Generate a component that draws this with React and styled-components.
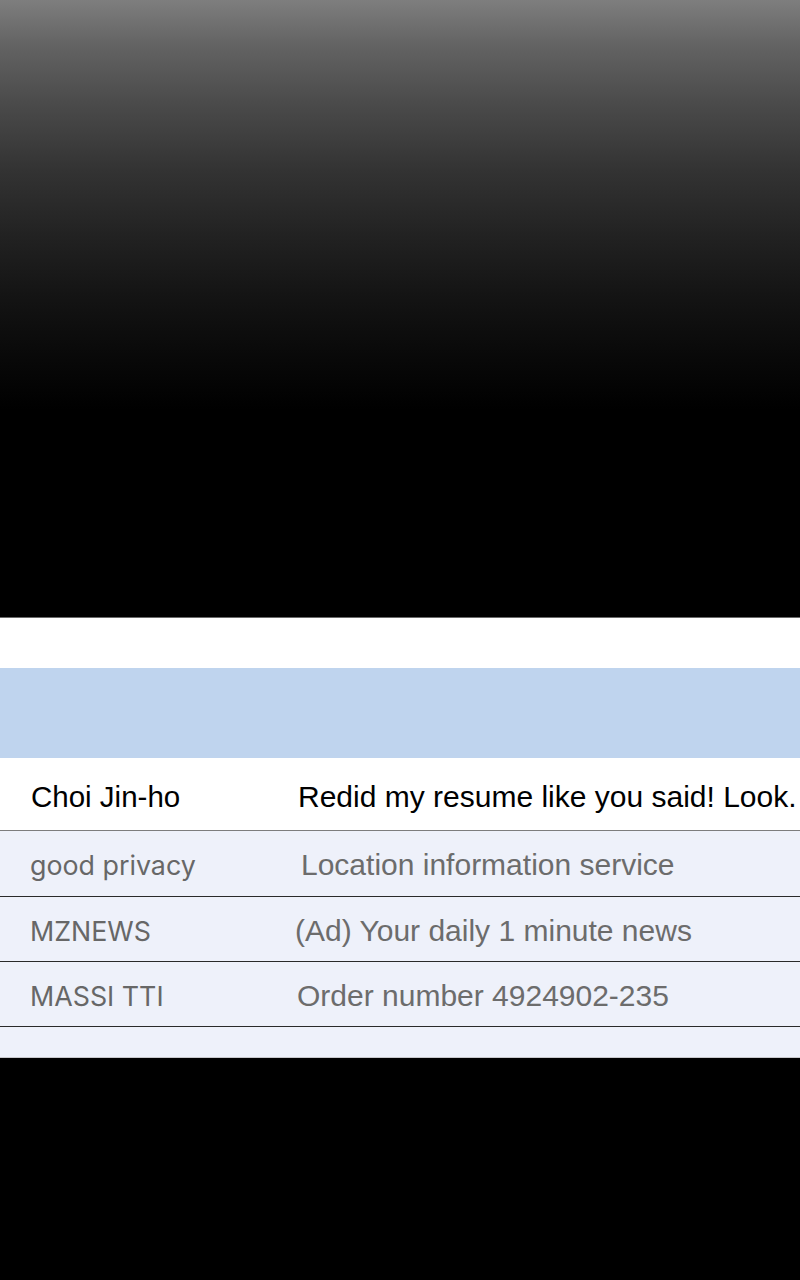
import React from 'react'
import styled, { createGlobalStyle } from 'styled-components'

const GlobalStyle = createGlobalStyle`
  html, body {
    margin: 0;
    padding: 0;
    background: #000;
  }
  * {
    box-sizing: border-box;
  }
`

const Page = styled.div`
  width: 800px;
  height: 1280px;
  display: flex;
  flex-direction: column;
  background: #000;
  overflow: hidden;
`

const Fade = styled.div`
  height: 618px;
  border-bottom: 1px solid #6a6a6a;
  background: linear-gradient(
    to bottom,
    #7e7e7e 0px,
    #636363 45px,
    #4a4a4a 105px,
    #333 170px,
    #222 235px,
    #141414 295px,
    #080808 360px,
    #000 410px
  );
`

const Inbox = styled.div`
  display: flex;
  flex-direction: column;
  background: #eef1fa;
`

const TopGap = styled.div`
  height: 50px;
  background: #fff;
`

const Header = styled.div`
  height: 90px;
  background: #bfd4ee;
`

const Row = styled.div`
  display: grid;
  grid-template-columns: 268px 1fr;
  align-items: center;
  height: ${(p) => p.h}px;
  padding: ${(p) => (p.unread ? 6 : 3)}px 0 0 30px;
  background: ${(p) => (p.unread ? '#fff' : '#eef1fa')};
  border-bottom: 1px solid ${(p) => (p.unread ? '#7d7d7d' : '#2a2a2a')};
  white-space: nowrap;
`

const Sender = styled.span`
  font-family: ${(p) => (p.unread ? '"Liberation Sans", Arial' : 'Inter, Lato')}, sans-serif;
  font-size: ${(p) => (p.unread ? 29.5 : 26.8)}px;
  color: ${(p) => (p.unread ? '#000' : '#676767')};
  margin-left: ${(p) => (p.unread ? 1 : 0)}px;
`

const Subject = styled.span`
  font-family: "Liberation Sans", Arial, sans-serif;
  font-size: 30px;
  color: ${(p) => (p.unread ? '#000' : '#6c6c6c')};
  margin-left: ${(p) => p.nudge || 0}px;
`

const Tail = styled.div`
  height: 31px;
  background: #eef1fa;
  border-bottom: 1px solid #c8c8cc;
`

const Night = styled.div`
  flex: 1;
  background: #000;
`

const mails = [
  { from: 'Choi Jin-ho', subject: 'Redid my resume like you said! Look.', unread: true, h: 73, nudge: 0 },
  { from: 'good privacy', subject: 'Location information service', h: 66, nudge: 3 },
  { from: 'MZNEWS', subject: '(Ad) Your daily 1 minute news', h: 65, nudge: -3 },
  { from: 'MASSI TTI', subject: 'Order number 4924902-235', h: 65, nudge: -1 },
]

export default function App() {
  return (
    <Page>
      <GlobalStyle />
      <Fade />
      <Inbox>
        <TopGap />
        <Header />
        {mails.map((m) => (
          <Row key={m.from} unread={m.unread} h={m.h}>
            <Sender unread={m.unread}>{m.from}</Sender>
            <Subject unread={m.unread} nudge={m.nudge}>
              {m.subject}
            </Subject>
          </Row>
        ))}
        <Tail />
      </Inbox>
      <Night />
    </Page>
  )
}
